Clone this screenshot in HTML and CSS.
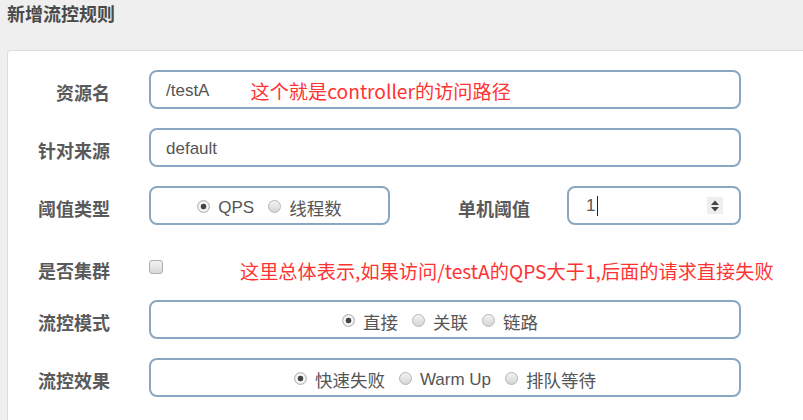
FILE: index.html
```html
<!DOCTYPE html>
<html lang="zh">
<head>
<meta charset="utf-8">
<title>新增流控规则</title>
<link rel="stylesheet" href="styles.css">
</head>
<body>
<div class="header"><h1 class="title">新增流控规则</h1></div>
<div class="card">
  <div class="row">
    <div class="label">资源名</div>
    <div class="field wide"><span class="val">/testA</span><span class="note note1">这个就是controller的访问路径</span></div>
  </div>
  <div class="row">
    <div class="label">针对来源</div>
    <div class="field wide"><span class="val">default</span></div>
  </div>
  <div class="row">
    <div class="label">阈值类型</div>
    <div class="field small center">
      <span class="radio checked"></span><span class="opt">QPS</span>
      <span class="radio"></span><span class="opt cjk">线程数</span>
    </div>
    <div class="label label2">单机阈值</div>
    <div class="field num">
      <span class="val">1</span><span class="caret"></span>
      <span class="spin"><svg width="10" height="14" viewBox="0 0 10 14"><path d="M1 6 L5 1.5 L9 6 Z M1 8 L5 12.5 L9 8 Z" fill="#444"/></svg></span>
    </div>
  </div>
  <div class="row row-check">
    <div class="label">是否集群</div>
    <span class="checkbox"></span>
    <span class="note note2">这里总体表示,如果访问/testA的QPS大于1,后面的请求直接失败</span>
  </div>
  <div class="row">
    <div class="label">流控模式</div>
    <div class="field wide center shift">
      <span class="radio checked"></span><span class="opt cjk">直接</span>
      <span class="radio"></span><span class="opt cjk">关联</span>
      <span class="radio"></span><span class="opt cjk">链路</span>
    </div>
  </div>
  <div class="row">
    <div class="label">流控效果</div>
    <div class="field wide center">
      <span class="radio checked"></span><span class="opt cjk">快速失败</span>
      <span class="radio"></span><span class="opt">Warm Up</span>
      <span class="radio"></span><span class="opt cjk">排队等待</span>
    </div>
  </div>
</div>
</body>
</html>
```

FILE: styles.css
```css
html, body {
  margin: 0;
  padding: 0;
  background: #efefef;
  height: 100%;
  overflow: hidden;
}
body {
  font-family: "Liberation Sans", "Noto Sans CJK SC", sans-serif;
}
.header {
  height: 50px;
  padding-left: 7px;
  padding-top: 2px;
  box-sizing: border-box;
}
.title {
  margin: 0;
  font-family: "Noto Sans CJK SC", sans-serif;
  font-size: 18px;
  line-height: 22px;
  font-weight: bold;
  color: #4a4a4a;
}
.card {
  margin-left: 7px;
  background: #fff;
  border-top: 1px solid #dcdcdc;
  border-left: 1px solid #dcdcdc;
  border-top-left-radius: 4px;
  padding-top: 19px;
  height: 350px;
}
.row {
  display: flex;
  align-items: center;
  height: 39px;
  margin-bottom: 19px;
}
.label {
  width: 102px;
  text-align: right;
  margin-right: 39px;
  font-family: "Noto Sans CJK SC", sans-serif;
  font-weight: bold;
  font-size: 18px;
  color: #5a5a5a;
  padding-top: 4px;
}
.label2 {
  width: auto;
  margin-left: 68px;
  margin-right: 37px;
}
.field {
  height: 39px;
  box-sizing: border-box;
  border: 2px solid #8aa7c2;
  border-radius: 8px;
  display: flex;
  align-items: center;
  padding-left: 15px;
  padding-top: 2px;
  font-size: 17px;
  color: #555;
}
.wide { width: 592px; }
.small { width: 241px; }
.num { width: 174px; padding-left: 17px; padding-right: 16px; padding-top: 0; }
.center { justify-content: center; padding-left: 0; padding-top: 4px; }
.shift { padding-right: 10px; }
.val { color: #555; }
.note {
  font-family: "Noto Sans CJK SC", sans-serif;
  font-size: 19.2px;
  color: #ff3333;
}
.note1 { margin-left: 41px; }
.note2 { margin-left: 77px; padding-top: 6px; }
.caret {
  width: 1px;
  height: 20px;
  background: #222;
  margin-left: 2px;
}
.spin {
  margin-left: auto;
  width: 16px;
  height: 17px;
  background: #eeeeee;
  display: flex;
  align-items: center;
  justify-content: center;
}
.radio {
  width: 11px;
  height: 11px;
  border-radius: 50%;
  border: 1px solid #b5b5b5;
  background: linear-gradient(#f2f2f2, #d6d6d6);
  box-sizing: content-box;
  margin-right: 8px;
  margin-left: 14px;
  margin-top: -3px;
  flex: none;
}
.radio:first-child { margin-left: 0; }
.radio.checked {
  background: radial-gradient(circle, #454545 0, #454545 2.6px, #fafafa 3.2px, #fafafa 4px, #dcdcdc 5.5px);
}
.opt { font-size: 17px; color: #555; }
.opt.cjk { font-family: "Noto Sans CJK SC", sans-serif; font-size: 17.5px; }
.row-check {
  margin-top: 23px;
  margin-bottom: 13px;
}
.checkbox {
  width: 12px;
  height: 12px;
  border: 1px solid #b0b0b0;
  border-radius: 3px;
  background: linear-gradient(#f2f2f2, #d9d9d9);
  flex: none;
  margin-top: -2px;
}
```
